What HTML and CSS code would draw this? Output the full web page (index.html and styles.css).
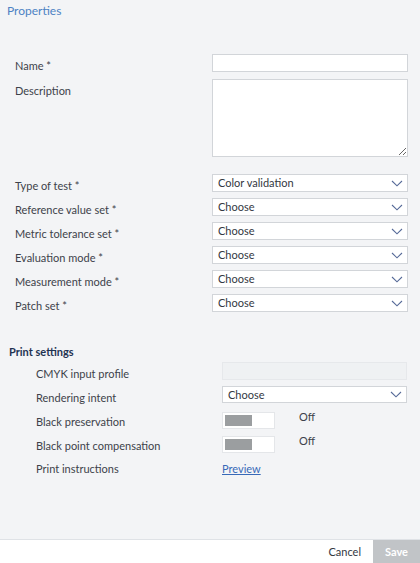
FILE: index.html
```html
<!DOCTYPE html>
<html>
<head>
<meta charset="utf-8">
<link rel="stylesheet" href="styles.css">
</head>
<body>
<div class="page">
  <main class="main">
    <h1 class="title">Properties</h1>
    <div class="form">
      <div class="row row-name">
        <label class="lbl">Name *</label>
        <div class="input"></div>
      </div>
      <div class="row row-desc">
        <label class="lbl">Description</label>
        <textarea class="area"></textarea>
      </div>
      <div class="row row-first-select">
        <label class="lbl">Type of test *</label>
        <div class="select"><span>Color validation</span><svg class="chev" width="12" height="7" viewBox="0 0 12 7"><path d="M1 1 L6 5.8 L11 1" fill="none" stroke="#566a98" stroke-width="1.1"/></svg></div>
      </div>
      <div class="row">
        <label class="lbl">Reference value set *</label>
        <div class="select"><span>Choose</span><svg class="chev" width="12" height="7" viewBox="0 0 12 7"><path d="M1 1 L6 5.8 L11 1" fill="none" stroke="#566a98" stroke-width="1.1"/></svg></div>
      </div>
      <div class="row">
        <label class="lbl">Metric tolerance set *</label>
        <div class="select"><span>Choose</span><svg class="chev" width="12" height="7" viewBox="0 0 12 7"><path d="M1 1 L6 5.8 L11 1" fill="none" stroke="#566a98" stroke-width="1.1"/></svg></div>
      </div>
      <div class="row">
        <label class="lbl">Evaluation mode *</label>
        <div class="select"><span>Choose</span><svg class="chev" width="12" height="7" viewBox="0 0 12 7"><path d="M1 1 L6 5.8 L11 1" fill="none" stroke="#566a98" stroke-width="1.1"/></svg></div>
      </div>
      <div class="row">
        <label class="lbl">Measurement mode *</label>
        <div class="select"><span>Choose</span><svg class="chev" width="12" height="7" viewBox="0 0 12 7"><path d="M1 1 L6 5.8 L11 1" fill="none" stroke="#566a98" stroke-width="1.1"/></svg></div>
      </div>
      <div class="row">
        <label class="lbl">Patch set *</label>
        <div class="select"><span>Choose</span><svg class="chev" width="12" height="7" viewBox="0 0 12 7"><path d="M1 1 L6 5.8 L11 1" fill="none" stroke="#566a98" stroke-width="1.1"/></svg></div>
      </div>
    </div>

    <h2 class="section">Print settings</h2>
    <div class="print">
      <div class="prow">
        <label class="lbl">CMYK input profile</label>
        <div class="input disabled"></div>
      </div>
      <div class="prow prow-render">
        <label class="lbl">Rendering intent</label>
        <div class="select"><span>Choose</span><svg class="chev" width="12" height="7" viewBox="0 0 12 7"><path d="M1 1 L6 5.8 L11 1" fill="none" stroke="#566a98" stroke-width="1.1"/></svg></div>
      </div>
      <div class="prow prow-toggle">
        <label class="lbl lbl-t">Black preservation</label>
        <div class="tgl-wrap"><div class="toggle"><span class="knob"></span></div><span class="off">Off</span></div>
      </div>
      <div class="prow prow-toggle">
        <label class="lbl lbl-t">Black point compensation</label>
        <div class="tgl-wrap"><div class="toggle"><span class="knob"></span></div><span class="off">Off</span></div>
      </div>
      <div class="prow prow-link">
        <label class="lbl lbl-l">Print instructions</label>
        <div><a class="link" href="#">Preview</a></div>
      </div>
    </div>
  </main>
  <footer class="footer">
    <button class="cancel">Cancel</button>
    <button class="save">Save</button>
  </footer>
</div>
</body>
</html>
```

FILE: styles.css
```css
* { box-sizing: border-box; }
html, body { margin: 0; padding: 0; }
body {
  font-family: Lato, "Noto Sans", sans-serif;
  font-size: 11px;
  color: #3d424a;
  background: #f3f4f6;
}
.page {
  width: 420px;
  height: 563px;
  display: flex;
  flex-direction: column;
}
.main {
  flex: 1;
  border-bottom: 1px solid #dfe2e6;
  padding: 0 12px 0 15px;
}
.title {
  margin: 0 0 0 -8px;
  padding-top: 2px;
  font-size: 12px;
  font-weight: normal;
  color: #4d82c4;
  line-height: 17px;
}
.form { margin-top: 35px; }
.row {
  display: grid;
  grid-template-columns: 197px 1fr;
  margin-bottom: 6px;
}
.row-name { margin-bottom: 7px; }
.row-desc { margin-bottom: 17px; }
.lbl {
  padding-top: 6px;
  line-height: 12px;
  white-space: nowrap;
}
.input {
  height: 18px;
  background: #fff;
  border: 1px solid #d2d5d9;
}
.input.disabled {
  background: #eff1f3;
  border-color: #e6e8eb;
}
.area {
  display: block;
  height: 78px;
  width: 100%;
  margin: 0;
  border: 1px solid #d2d5d9;
  background: #fff;
  resize: vertical;
  font: inherit;
}
.select {
  height: 18px;
  background: #fff;
  border: 1px solid #d2d5d9;
  display: flex;
  align-items: center;
  justify-content: space-between;
  padding: 0 4px 0 5px;
  color: #33383f;
  font-size: 11px;
  line-height: 14px;
}
.chev { display: block; }
.section {
  margin: 32px 0 0 -6px;
  font-size: 11px;
  font-weight: bold;
  color: #1f3352;
  line-height: 15px;
}
.print {
  margin-top: 3px;
  padding-left: 21px;
  padding-right: 1px;
}
.prow {
  display: grid;
  grid-template-columns: 186px 1fr;
  margin-bottom: 6px;
  height: 18px;
}
.prow-render { margin-bottom: 9px; height: 17px; }
.prow-render .select { height: 17px; }
.prow-toggle { height: 17px; margin-bottom: 7px; }
.lbl-t { padding-top: 4px; }
.tgl-wrap {
  display: flex;
  align-items: flex-start;
  gap: 24px;
}
.toggle {
  width: 53px;
  height: 17px;
  background: #fff;
  border: 1px solid #e4e6e9;
  padding: 2px;
}
.knob {
  display: block;
  width: 27px;
  height: 11px;
  background: #9b9ea0;
}
.off {
  line-height: 12px;
  margin-top: -1px;
  color: #3d424a;
}
.lbl-l { padding-top: 3px; }
.link {
  display: inline-block;
  color: #3869b8;
  text-decoration: underline;
  line-height: 12px;
  padding-top: 3px;
}
.footer {
  height: 23px;
  background: #fff;
  display: flex;
  justify-content: flex-end;
  align-items: stretch;
}
button {
  font-family: inherit;
  font-size: 11px;
  border: none;
  margin: 0;
  cursor: pointer;
}
.cancel {
  background: transparent;
  color: #33383f;
  padding: 0 12px 0 0;
}
.save {
  width: 47px;
  background: #c1c4c7;
  color: #fff;
  font-weight: bold;
}
```
